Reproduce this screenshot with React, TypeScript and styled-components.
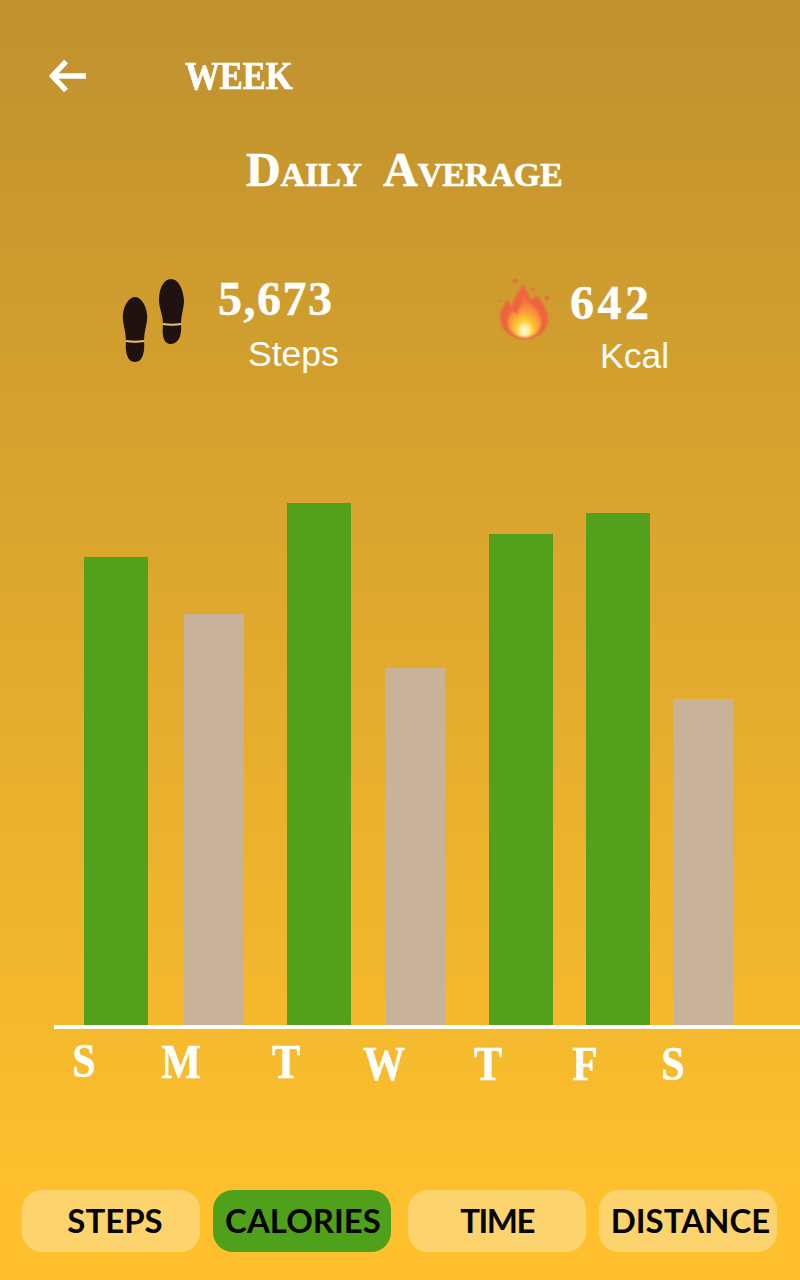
import React from "react";
import styled, { createGlobalStyle } from "styled-components";

const GlobalStyle = createGlobalStyle`
  html, body {
    margin: 0;
    padding: 0;
  }
`;

const serif = `"Liberation Serif", "DejaVu Serif", serif`;

const Screen = styled.div`
  width: 800px;
  height: 1280px;
  overflow: hidden;
  display: flex;
  flex-direction: column;
  background: linear-gradient(180deg, #bf912f 0%, #fec02d 94%);
`;

const Header = styled.div`
  display: flex;
  align-items: center;
  height: 40px;
  margin-top: 56px;
  padding-left: 49px;
`;

const BackButton = styled.svg`
  width: 38px;
  height: 36px;
  margin-right: 98px;
`;

const WeekTitle = styled.span`
  display: inline-block;
  font-family: ${serif};
  font-weight: 700;
  font-size: 35px;
  line-height: 40px;
  color: #fff;
  letter-spacing: -0.4px;
  -webkit-text-stroke: 0.6px #fff;
  transform: scaleY(1.15);
`;

const Heading = styled.h1`
  margin: 50px 0 0 246px;
  height: 48px;
  font-family: ${serif};
  font-weight: 700;
  font-size: 48px;
  line-height: 48px;
  color: #fff;
  font-variant: small-caps;
  white-space: pre;
  letter-spacing: -0.1px;
  -webkit-text-stroke: 0.6px #fff;
`;

const Stats = styled.div`
  display: flex;
  margin-top: 84px;
  height: 108px;
`;

const Stat = styled.div<{ $left: number; $width: number }>`
  display: flex;
  width: ${(p) => p.$width}px;
  margin-left: ${(p) => p.$left}px;
`;

const StatText = styled.div<{ $left: number; $top: number }>`
  display: flex;
  flex-direction: column;
  margin-left: ${(p) => p.$left}px;
  margin-top: ${(p) => p.$top}px;
`;

const StatValue = styled.span<{ $spacing: number }>`
  font-family: ${serif};
  font-weight: 700;
  font-size: 48px;
  line-height: 50px;
  letter-spacing: ${(p) => p.$spacing}px;
  color: #fff;
  -webkit-text-stroke: 0.4px #fff;
`;

const StatLabel = styled.span<{ $indent: number; $gap: number }>`
  margin-left: ${(p) => p.$indent}px;
  margin-top: ${(p) => p.$gap}px;
  font-family: "Liberation Sans", Arial, sans-serif;
  font-size: 35.5px;
  line-height: 40px;
  color: #fff;
`;

const Chart = styled.div`
  display: flex;
  align-items: flex-end;
  height: 522px;
  margin-top: 117px;
  padding-left: 84px;
`;

const Bar = styled.div<{ $h: number; $w: number; $left: number; $active: boolean }>`
  width: ${(p) => p.$w}px;
  height: ${(p) => p.$h}px;
  margin-left: ${(p) => p.$left}px;
  background: ${(p) => (p.$active ? "#53a01c" : "#c8b299")};
`;

const Axis = styled.div`
  height: 4px;
  margin-left: 54px;
  background: #fff;
`;

const Days = styled.div`
  display: flex;
  height: 161px;
`;

const Day = styled.span<{ $x: number; $top: number }>`
  width: 0;
  height: 50px;
  margin-left: ${(p) => p.$x}px;
  margin-top: ${(p) => p.$top}px;
  font-family: ${serif};
  font-weight: 700;
  font-size: 42px;
  line-height: 50px;
  color: #fff;
  display: flex;
  justify-content: center;
  -webkit-text-stroke: 0.5px #fff;
  transform: scaleY(1.15);
`;

const Tabs = styled.div`
  display: flex;
  padding-left: 22px;
`;

const Tab = styled.div<{ $left: number; $active?: boolean; $pad: number; $spacing?: number }>`
  width: 178px;
  height: 62px;
  margin-left: ${(p) => p.$left}px;
  border-radius: 20px;
  display: flex;
  align-items: center;
  justify-content: center;
  padding-left: ${(p) => p.$pad}px;
  padding-bottom: 2px;
  box-sizing: border-box;
  background: ${(p) => (p.$active ? "#4fa01b" : "#fdd36d")};
  font-family: Lato, "Open Sans", sans-serif;
  font-weight: 700;
  font-size: 33px;
  letter-spacing: ${(p) => p.$spacing ?? 0}px;
  color: #070500;
  white-space: nowrap;
`;

const Footprints = () => (
  <svg width="66" height="86" viewBox="0 0 66 86">
    <g fill="#1f1210">
      <path d="M13 19c6 0 11 8 12 17 1 9-3 16-3 28 1 9-1 20-9 20-8 0-10-11-9-20 0-12-4-19-3-28 1-9 6-17 12-17z" />
      <path d="M49 1c7 0 12 9 13 21 0 9-3 14-3 25 1 9-2 19-10 19s-9-10-8-19c0-11-4-16-4-25 0-12 5-21 12-21z" />
    </g>
    <path d="M4 63q9 1.500 18 0M41 46q9 1.500 18 0" fill="none" stroke="#e9c26e" strokeWidth="2" />
  </svg>
);

const Flame = () => (
  <svg width="54" height="64" viewBox="0 0 54 64">
    <defs>
      <filter id="soft" x="-10%" y="-10%" width="120%" height="120%">
        <feGaussianBlur stdDeviation="1" />
      </filter>
      <radialGradient id="core" cx="0.5" cy="0.86" r="0.7">
        <stop offset="0" stopColor="#fffbe8" />
        <stop offset="0.16" stopColor="#fff2a8" />
        <stop offset="0.36" stopColor="#fdcb34" />
        <stop offset="0.7" stopColor="#f9973a" />
        <stop offset="1" stopColor="#f4763e" />
      </radialGradient>
    </defs>
    <g fill="#ea6a3c">
      <circle cx="16" cy="3" r="2.500" opacity="0.8" />
      <circle cx="34" cy="11" r="2" opacity="0.7" />
      <circle cx="48" cy="20" r="2.500" opacity="0.8" />
      <circle cx="2" cy="23" r="1.500" opacity="0.5" />
    </g>
    <g filter="url(#soft)">
      <path
        d="M24 6C27 11 30 15 31 22 33 21 36 20 38 17 42 23 49 30 49 41 49 53 38 61 26 61 13 61 2 53 1 41 1 33 5 27 9 21 10 25 11 27 13 29 14 20 20 14 24 6z"
        fill="#f0633f"
      />
      <path
        d="M25 17C27 23 33 28 37 31 41 36 43 42 42 47 40 55 33 59 26 59 18 59 11 55 9 47 8 41 11 36 14 33 16 35 17 36 18 37 20 30 24 25 25 17z"
        fill="url(#core)"
      />
    </g>
  </svg>
);

const days = [
  { label: "S", x: 84, top: 7 },
  { label: "M", x: 97, top: 8 },
  { label: "T", x: 105, top: 8 },
  { label: "W", x: 98, top: 10 },
  { label: "T", x: 104, top: 10 },
  { label: "F", x: 97, top: 10 },
  { label: "S", x: 88, top: 10 },
];

const bars = [
  { h: 468, w: 64, left: 0, active: true },
  { h: 411, w: 60, left: 36, active: false },
  { h: 522, w: 64, left: 43, active: true },
  { h: 357, w: 60, left: 34, active: false },
  { h: 491, w: 64, left: 44, active: true },
  { h: 512, w: 64, left: 33, active: true },
  { h: 326, w: 60, left: 23, active: false },
];

function App() {
  return (
    <Screen>
      <GlobalStyle />
      <Header>
        <BackButton viewBox="0 0 38 36">
          <path
            d="M17 3.500 3.500 18 17 32.500M5 18h32"
            fill="none"
            stroke="#fff"
            strokeWidth="5.500"
          />
        </BackButton>
        <WeekTitle>WEEK</WeekTitle>
      </Header>
      <Heading>{"Daily  Average"}</Heading>
      <Stats>
        <Stat $left={122} $width={330}>
          <Footprints />
          <StatText $left={30} $top={-4}>
            <StatValue $spacing={1.5}>5,673</StatValue>
            <StatLabel $indent={30} $gap={10}>Steps</StatLabel>
          </StatText>
        </Stat>
        <Stat $left={47} $width={200}>
          <Flame />
          <StatText $left={17} $top={0}>
            <StatValue $spacing={3.5}>642</StatValue>
            <StatLabel $indent={30} $gap={8}>Kcal</StatLabel>
          </StatText>
        </Stat>
      </Stats>
      <Chart>
        {bars.map((b, i) => (
          <Bar key={i} $h={b.h} $w={b.w} $left={b.left} $active={b.active} />
        ))}
      </Chart>
      <Axis />
      <Days>
        {days.map((d, i) => (
          <Day key={i} $x={d.x} $top={d.top}>
            {d.label}
          </Day>
        ))}
      </Days>
      <Tabs>
        <Tab $left={0} $pad={8}>STEPS</Tab>
        <Tab $left={13} $active $pad={2}>CALORIES</Tab>
        <Tab $left={17} $pad={0} $spacing={-1.5}>TIME</Tab>
        <Tab $left={13} $pad={5}>DISTANCE</Tab>
      </Tabs>
    </Screen>
  );
}

export default App;
